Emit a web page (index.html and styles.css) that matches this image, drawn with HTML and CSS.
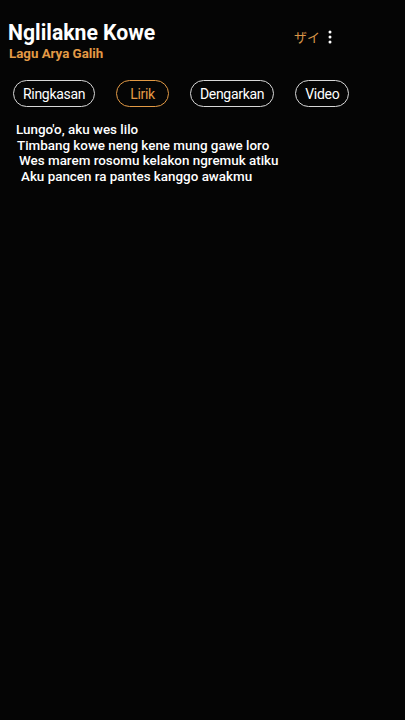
FILE: index.html
```html
<!DOCTYPE html>
<html>
<head>
<meta charset="utf-8">
<link rel="stylesheet" href="styles.css">
</head>
<body>
<div class="page">
  <header class="head">
    <div class="titles">
      <h1 class="title">Nglilakne Kowe</h1>
      <div class="sub">Lagu Arya Galih</div>
    </div>
    <div class="actions">
      <span class="kana">ザイ</span>
      <svg class="more" width="4" height="14" viewBox="0 0 4 14"><circle cx="2" cy="2" r="1.5" fill="#fff"/><circle cx="2" cy="7" r="1.5" fill="#fff"/><circle cx="2" cy="12" r="1.5" fill="#fff"/></svg>
    </div>
  </header>
  <nav class="tabs">
    <span class="pill">Ringkasan</span>
    <span class="pill active">Lirik</span>
    <span class="pill">Dengarkan</span>
    <span class="pill">Video</span>
  </nav>
  <div class="lyrics">
    <div class="line l1">Lungo'o, aku wes lilo</div>
    <div class="line l2">Timbang kowe neng kene mung gawe loro</div>
    <div class="line l3">Wes marem rosomu kelakon ngremuk atiku</div>
    <div class="line l4">Aku pancen ra pantes kanggo awakmu</div>
  </div>
</div>
</body>
</html>
```
FILE: styles.css
```css
html, body {
  margin: 0;
  padding: 0;
  background: #050505;
  height: 100%;
}
body {
  font-family: Roboto, "Liberation Sans", sans-serif;
  color: #fff;
}
.page {
  padding: 21px 0 0 0;
}
.head {
  display: flex;
  justify-content: space-between;
  align-items: flex-start;
  padding: 0 0 0 8px;
}
.title {
  margin: 0;
  font-size: 21.2px;
  font-weight: 700;
  line-height: 24px;
}
.sub {
  margin: 1px 0 0 1px;
  font-size: 13.3px;
  font-weight: 700;
  color: #e39a45;
  line-height: 16px;
}
.actions {
  display: flex;
  align-items: center;
  gap: 8px;
  margin: 8px 73px 0 0;
}
.kana {
  color: #d99548;
  font-family: "Noto Sans CJK JP", sans-serif;
  font-size: 13px;
  font-weight: 400;
  line-height: 16px;
}
.more { display: block; }
.tabs {
  display: flex;
  gap: 21px;
  padding: 18px 0 0 13px;
}
.pill {
  box-sizing: border-box;
  height: 27px;
  display: flex;
  align-items: center;
  padding: 0 9px;
  border: 1px solid #d8d8d8;
  border-radius: 14px;
  font-size: 14px;
  letter-spacing: -0.3px;
}
.pill.active {
  border-color: #e39a45;
  color: #e39a45;
  padding: 0 13px;
}
.lyrics {
  padding: 15px 0 0 16px;
}
.line {
  font-size: 13.4px;
  font-weight: 500;
  line-height: 15.7px;
}
.l2 { padding-left: 1px; }
.l3 { padding-left: 3px; }
.l4 { padding-left: 5px; }
```
